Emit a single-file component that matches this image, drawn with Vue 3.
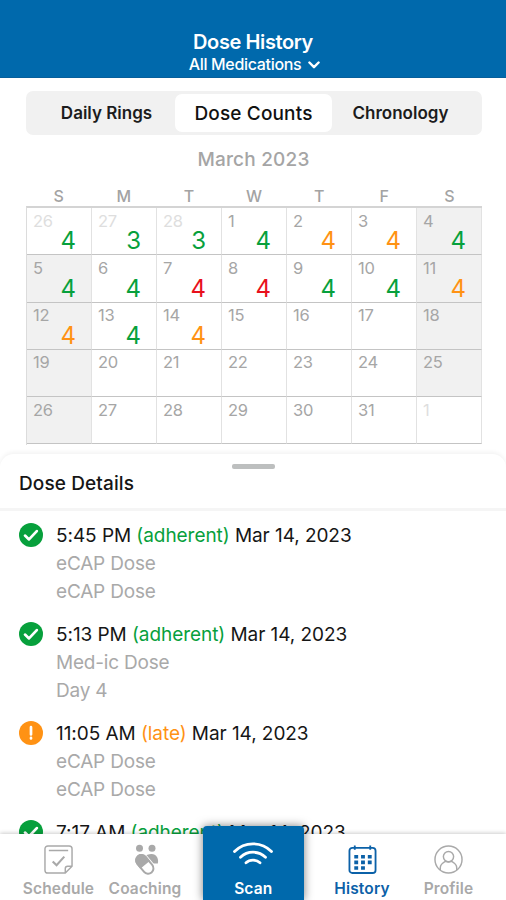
<template>
  <div class="app">
    <header class="header">
      <h1 class="headerTitle">Dose History</h1>
      <button class="filterButton">
        <span>All Medications</span>
        <svg class="chevron" viewBox="0 0 12 8">
          <path d="M1.4 1.5 6 6.2l4.6-4.7" />
        </svg>
      </button>
    </header>

    <section class="calendar">
      <div class="segments">
        <button
          v-for="name in views"
          :key="name"
          class="segment"
          :class="{ active: view === name }"
          @click="view = name"
        >
          {{ name }}
        </button>
      </div>
      <p class="month">March 2023</p>
      <div class="weekdays">
        <span v-for="(day, index) in weekdays" :key="index">{{ day }}</span>
      </div>
      <div class="days">
        <div
          v-for="(day, index) in days"
          :key="index"
          class="day"
          :class="{ outside: day.outside, weekend: day.weekend }"
        >
          <span class="date">{{ day.date }}</span>
          <span v-if="day.count" class="count" :class="day.status">{{ day.count }}</span>
        </div>
      </div>
    </section>

    <section class="sheet">
      <div class="sheetHeader">
        <div class="handle"></div>
        <h2 class="sheetTitle">Dose Details</h2>
      </div>
      <ul class="doses">
        <li v-for="dose in doses" :key="dose.time" class="dose">
          <svg class="doseIcon" :class="dose.color" viewBox="0 0 24 24">
            <circle cx="12" cy="12" r="12" />
            <path v-if="dose.status === 'adherent'" d="m6 12.6 4 3.8 7.8-8.3" />
            <path v-else d="M12 6.2v7.2M12 16.9v.6" />
          </svg>
          <div>
            <p class="doseTime">
              {{ dose.time }} <span :class="dose.color">({{ dose.status }})</span> Mar 14, 2023
            </p>
            <p v-for="(line, index) in dose.lines" :key="index" class="doseLine">{{ line }}</p>
          </div>
        </li>
      </ul>
    </section>

    <nav class="tabs">
      <a class="tab">
        <svg viewBox="0 0 30 30" class="tabIcon">
          <path d="M4 1h22a3 3 0 0 1 3 3v18l-7 7H4a3 3 0 0 1-3-3V4a3 3 0 0 1 3-3ZM5 5.6h20M29 22h-4.5a2.5 2.5 0 0 0-2.5 2.5V29" />
          <path class="thick" d="m9 17 4 4 8-9" />
        </svg>
        <span>Schedule</span>
      </a>
      <a class="tab">
        <svg viewBox="0 0 29 31" class="tabIcon coachingIcon">
          <g class="solid">
            <circle cx="8.5" cy="4.3" r="3.5" />
            <circle cx="21" cy="4.3" r="3.5" />
            <path d="M13.5 13C15 10.8 17.5 10 20.5 10c5 0 7.5 5 6.3 9.5H20Z" />
          </g>
          <g transform="translate(13.5 20) rotate(-40)">
            <rect class="pillGap" x="-7.3" y="-12" width="14.6" height="25" rx="7.3" />
            <rect class="pill" x="-5.3" y="-10" width="10.6" height="21" rx="5.3" />
            <path class="solid" d="M-6.3 1v-5.8a6.3 6.3 0 0 1 12.6 0V1Z" />
          </g>
        </svg>
        <span>Coaching</span>
      </a>
      <a class="tab scan">
        <svg viewBox="0 0 42 26" class="scanIcon">
          <path d="M2.5 10.5C12.5.2 29.5.2 39.5 10.5M8.500 16.300c7-6.800 18-6.800 25 0M14 21.800c3.800-3.600 10.200-3.600 14 0" />
        </svg>
        <span>Scan</span>
      </a>
      <a class="tab current">
        <svg viewBox="0 0 30 30" class="tabIcon">
          <rect x="1.5" y="3" width="27" height="26" rx="3" class="medium" />
          <path class="medium" d="M7 .5v4.5M23 .5v4.5" />
          <path class="dots" d="M6.5 12.2h4M13.500 12.200h4M20.500 12.200h4M6.500 18h4M13.500 18h4M20.500 18h4M6.500 23.800h4M13.500 23.800h4" />
        </svg>
        <span>History</span>
      </a>
      <a class="tab">
        <svg viewBox="0 0 30 30" class="tabIcon">
          <circle cx="15" cy="15" r="14" />
          <circle cx="15" cy="12" r="5.3" />
          <path d="M6.5 26v-2.5c0-3.5 2.5-5 5.5-6.7 2 1 4 1 6 0 3 1.7 5.5 3.2 5.5 6.7V26" />
        </svg>
        <span>Profile</span>
      </a>
    </nav>
  </div>
</template>

<script setup>
import { ref } from 'vue';

const views = ['Daily Rings', 'Dose Counts', 'Chronology'];
const view = ref('Dose Counts');
const weekdays = ['S', 'M', 'T', 'W', 'T', 'F', 'S'];

// one entry per day, starting on Feb 26
const counts = [4, 3, 3, 4, 4, 4, 4, 4, 4, 4, 4, 4, 4, 4, 4, 4, 4];
const statuses = 'ggggoogggrrggoogo';
const colors = { g: 'green', o: 'orange', r: 'red' };

const days = Array.from({ length: 35 }, (_, index) => {
  const outside = index < 3 || index === 34;
  const date = index < 3 ? 26 + index : index === 34 ? 1 : index - 2;
  return {
    date,
    outside,
    weekend: !outside && (index % 7 === 0 || index % 7 === 6),
    count: counts[index],
    status: colors[statuses[index]],
  };
});

const doses = [
  { time: '5:45 PM', status: 'adherent', color: 'green', lines: ['eCAP Dose', 'eCAP Dose'] },
  { time: '5:13 PM', status: 'adherent', color: 'green', lines: ['Med-ic Dose', 'Day 4'] },
  { time: '11:05 AM', status: 'late', color: 'orange', lines: ['eCAP Dose', 'eCAP Dose'] },
  { time: '7:17 AM', status: 'adherent', color: 'green', lines: [] },
];
</script>

<style>
body {
  margin: 0;
  background: #fff;
}
</style>

<style scoped>
.app {
  height: 900px;
  display: flex;
  flex-direction: column;
  overflow: hidden;
  background: #fff;
  font-family: Inter, 'Liberation Sans', sans-serif;
  color: #161616;
}

h1,
h2,
p,
ul {
  margin: 0;
  padding: 0;
}

button {
  border: 0;
  padding: 0;
  background: none;
  font-family: inherit;
  color: inherit;
}

svg {
  display: block;
  fill: none;
  stroke: currentColor;
}

.green {
  color: #07a03c;
}

.orange {
  color: #ff9214;
}

.red {
  color: #e8101c;
}

.header {
  height: 78px;
  flex: none;
  box-sizing: border-box;
  padding-top: 30px;
  display: flex;
  flex-direction: column;
  align-items: center;
  background: #0069ac;
  border-bottom: 1px solid #075f9b;
  color: #fff;

  .headerTitle {
    font-size: 20px;
    line-height: 24px;
    font-weight: 600;
    letter-spacing: -0.4px;
  }

  .filterButton {
    display: flex;
    align-items: center;
    gap: 7px;
    padding-left: 3px;
    font-size: 16px;
    line-height: 20px;
    font-weight: 500;
    letter-spacing: -0.32px;
  }

  .chevron {
    width: 12px;
    height: 8px;
    margin-top: 2px;
    stroke-width: 2.4;
    stroke-linecap: round;
    stroke-linejoin: round;
  }
}

.calendar {
  flex: none;
  height: 376px;
  box-sizing: border-box;
  padding: 13px 24px 0 26px;

  .segments {
    height: 44px;
    box-sizing: border-box;
    padding: 3px 3px 3px 5px;
    display: flex;
    border-radius: 7px;
    background: #f1f1f1;
  }

  .segment {
    flex: none;
    box-sizing: border-box;
    width: 144px;
    padding-left: 7px;
    font-size: 17px;
    font-weight: 600;
    color: #1c1c1c;

    &:last-child {
      padding: 0 7px 0 0;
    }

    &.active {
      width: 157px;
      padding: 0;
      border-radius: 7px;
      background: #fff;
      font-size: 19px;
      font-weight: 500;
      letter-spacing: 0.15px;
      color: #111;
    }
  }

  .month {
    padding-top: 14px;
    line-height: 22px;
    padding-right: 1px;
    font-size: 19px;
    font-weight: 500;
    letter-spacing: 0.2px;
    text-align: center;
    color: #a5a5a5;
  }

  .weekdays {
    display: grid;
    grid-template-columns: repeat(7, 1fr);
    padding-top: 15px;
    font-size: 16px;
    line-height: 20px;
    font-weight: 500;
    text-align: center;
    color: #a3a3a3;
  }

  .days {
    height: 238.5px;
    box-sizing: border-box;
    display: grid;
    grid-template-columns: repeat(7, 1fr);
    grid-template-rows: repeat(5, 1fr);
    border-top: 2px solid #d4d4d4;
    border-left: 1px solid #dcdcdc;
  }

  .day {
    display: flex;
    flex-direction: column;
    justify-content: space-between;
    padding: 2.5px 15px 0 6px;
    border-right: 1px solid #e2e2e2;
    border-bottom: 1px solid #c4c4c4;

    &.weekend {
      background: #f1f1f1;
    }
  }

  .date {
    font-size: 16.5px;
    line-height: 20px;
    letter-spacing: -0.3px;
    color: #a6a6a6;
  }

  .outside .date {
    color: #dedede;
  }

  .count {
    align-self: flex-end;
    font-size: 24px;
    line-height: 27px;
    margin-top: -8px;
  }
}

.sheet {
  flex: 1;
  min-height: 0;
  overflow: hidden;
  border-radius: 14px 14px 0 0;
  box-shadow: 0 -2px 4px rgba(0, 0, 0, 0.05);

  .sheetHeader {
    height: 57px;
    box-sizing: border-box;
    padding: 10px 0 0 19px;
    border-bottom: 3px solid #f5f5f5;
  }

  .handle {
    width: 43px;
    height: 5px;
    margin-left: 213px;
    border-radius: 2px;
    background: #bdbfbf;
  }

  .sheetTitle {
    padding-top: 3px;
    font-size: 19px;
    line-height: 24px;
    font-weight: 500;
    letter-spacing: 0.12px;
  }

  .doses {
    list-style: none;
    padding: 11px 0 0 19px;
  }

  .dose {
    height: 99px;
    display: flex;
    gap: 13px;
    font-size: 19px;
    line-height: 28px;
    letter-spacing: -0.06px;
    white-space: nowrap;
  }

  .doseIcon {
    width: 24px;
    height: 24px;
    margin-top: 1px;
    stroke: #fff;
    stroke-width: 2.7;
    stroke-linecap: round;
    stroke-linejoin: round;

    circle {
      fill: currentColor;
      stroke: none;
    }
  }

  .doseLine {
    letter-spacing: -0.2px;
    color: #a9a9a9;
  }
}

.tabs {
  position: relative;
  flex: none;
  height: 66px;
  padding-left: 1px;
  display: flex;
  justify-content: center;
  background: #fff;
  box-shadow: 0 -1px 4px rgba(0, 0, 0, 0.2);

  .tab {
    width: 86.5px;
    height: 66px;
    box-sizing: border-box;
    padding-top: 11px;
    display: flex;
    flex-direction: column;
    align-items: center;
    gap: 5px;
    font-size: 15.5px;
    line-height: 20px;
    font-weight: 600;
    letter-spacing: 0.15px;
    color: #a9a9a9;
  }

  .tabIcon {
    width: 29px;
    height: 29px;
    stroke-width: 1.5;
  }

  .coachingIcon {
    height: 31px;
    margin: -1px 0;
  }

  .solid {
    fill: currentColor;
    stroke: none;
  }

  .pill {
    fill: #fff;
    stroke-width: 2;
  }

  .pillGap {
    fill: #fff;
    stroke: none;
  }

  .thick {
    stroke-width: 2.2;
  }

  .medium {
    stroke-width: 1.9;
  }

  .dots {
    stroke-width: 3.7;
  }

  .current {
    color: #0b61a8;
  }

  .scan {
    width: 101px;
    height: 74px;
    margin: -8px 15px 0 14.5px;
    padding-top: 15px;
    gap: 12px;
    border-radius: 4px 4px 0 0;
    background: #0069ac;
    box-shadow: 0 0 10px rgba(0, 0, 0, 0.5);
    color: #fff;
  }

  .scanIcon {
    width: 42px;
    height: 26px;
    stroke-width: 2.8;
    stroke-linecap: round;
  }
}
</style>
